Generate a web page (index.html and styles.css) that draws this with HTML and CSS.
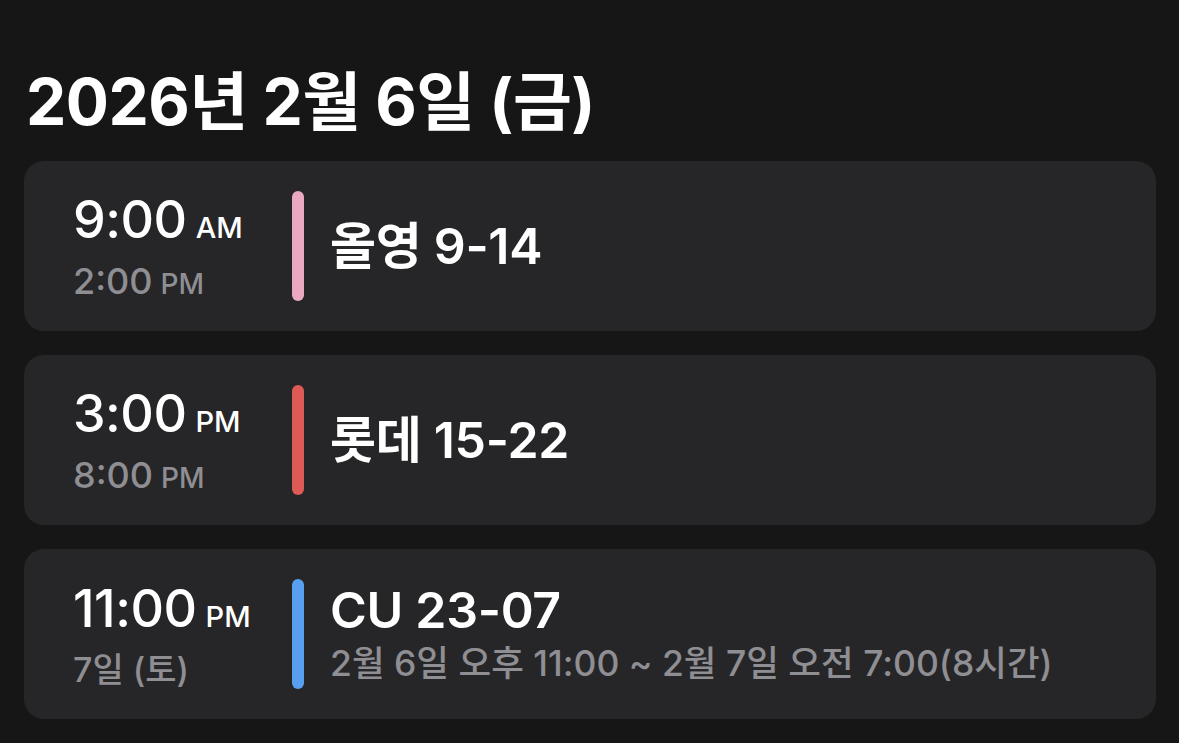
FILE: index.html
```html
<!DOCTYPE html>
<html lang="ko">
<head>
<meta charset="utf-8">
<title>일정</title>
<link rel="stylesheet" href="styles.css">
</head>
<body>
<main class="page">
  <h1 class="date-title">2026년 2월 6일 (금)</h1>
  <div class="list">
    <section class="card">
      <div class="time">
        <div class="start">9:00<span class="ampm">AM</span></div>
        <div class="end">2:00<span class="ampm-sm">PM</span></div>
      </div>
      <div class="bar bar-pink"></div>
      <div class="info">
        <div class="name">올영 9-14</div>
      </div>
    </section>
    <section class="card">
      <div class="time">
        <div class="start">3:00<span class="ampm">PM</span></div>
        <div class="end">8:00<span class="ampm-sm">PM</span></div>
      </div>
      <div class="bar bar-red"></div>
      <div class="info">
        <div class="name">롯데 15-22</div>
      </div>
    </section>
    <section class="card">
      <div class="time">
        <div class="start">11:00<span class="ampm">PM</span></div>
        <div class="end end-kr">7일 (토)</div>
      </div>
      <div class="bar bar-blue"></div>
      <div class="info">
        <div class="name">CU 23-07</div>
        <div class="detail">2월 6일 오후 11:00 ~ 2월 7일 오전 7:00(8시간)</div>
      </div>
    </section>
  </div>
</main>
</body>
</html>
```
FILE: styles.css
```css
html, body {
  margin: 0;
  padding: 0;
  background: #161616;
}
body {
  font-family: Inter, "Noto Sans CJK KR", "Noto Sans", sans-serif;
  color: #ffffff;
}
.page {
  padding: 62px 23px 0 24px;
}
.date-title {
  margin: 0 0 19px 2px;
  font-size: 64px;
  line-height: 80px;
  font-weight: 700;
  letter-spacing: -0.5px;
}
.list {
  display: flex;
  flex-direction: column;
  gap: 24px;
}
.card {
  height: 170px;
  box-sizing: border-box;
  background: #262628;
  border-radius: 20px;
  display: flex;
  align-items: center;
  padding: 0 49px;
}
.time {
  width: 219px;
  flex: none;
  padding-top: 6px;
}
.start {
  font-size: 52px;
  line-height: 58px;
  font-weight: 500;
  letter-spacing: -0.5px;
  white-space: nowrap;
}
.ampm {
  font-size: 29px;
  font-weight: 500;
  margin-left: 9px;
  letter-spacing: 0;
}
.end {
  font-size: 36px;
  line-height: 48px;
  font-weight: 500;
  color: #8e8e93;
  white-space: nowrap;
}
.ampm-sm {
  font-size: 28px;
  margin-left: 8px;
}
.end-kr {
  font-size: 34px;
}
.bar {
  width: 12px;
  height: 110px;
  border-radius: 6px;
  flex: none;
}
.bar-pink { background: #eaa9c1; }
.bar-red { background: #dd5a55; }
.bar-blue { background: #58a0ef; }
.info {
  margin-left: 26px;
  display: flex;
  flex-direction: column;
}
.name {
  font-size: 50px;
  line-height: 60px;
  font-weight: 600;
  letter-spacing: -0.3px;
}
.detail {
  font-size: 35.5px;
  line-height: 48px;
  font-weight: 500;
  color: #8e8e93;
}
```
